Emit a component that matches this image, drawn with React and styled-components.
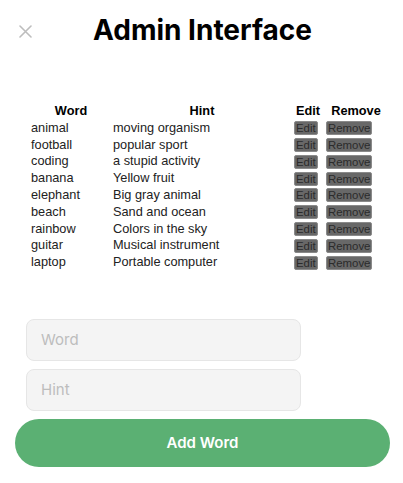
import React from "react";
import styled, { createGlobalStyle } from "styled-components";

const GlobalStyle = createGlobalStyle`
  html, body { margin: 0; padding: 0; background: #fff; }
  body { font-family: Inter, "Liberation Sans", sans-serif; }
`;

const Page = styled.div`
  width: 403px;
  height: 483px;
  box-sizing: border-box;
  display: flex;
  flex-direction: column;
  padding: 12px 13px 0 15px;
`;

const Header = styled.header`
  display: grid;
  grid-template-columns: 30px 1fr 30px;
  align-items: center;
  height: 36px;
`;

const CloseButton = styled.button`
  border: 0;
  background: none;
  padding: 0;
  width: 16px;
  height: 16px;
  margin-left: 2px;
  margin-top: 2px;
  display: flex;
  align-items: center;
  justify-content: center;
  cursor: pointer;
`;

const Title = styled.h1`
  margin: 0;
  text-align: center;
  font-family: Inter, "Liberation Sans", sans-serif;
  font-weight: 700;
  font-size: 28px;
  color: #000;
  letter-spacing: 0;
`;

const Table = styled.table`
  width: 360px;
  margin: 54px 0 0 14px;
  border-spacing: 2px;
  table-layout: fixed;
  font-family: "Liberation Sans", Arial, sans-serif;
  font-size: 12.75px;
  color: #222;
`;

const Th = styled.th`
  padding: 0;
  font-weight: 700;
  color: #000;
  text-align: center;
  line-height: 14.8px;
  white-space: nowrap;
`;

const Td = styled.td`
  padding: 0;
  text-align: left;
  line-height: 14.8px;
  white-space: nowrap;
`;

const SmallButton = styled.button`
  display: block;
  box-sizing: border-box;
  height: 14px;
  margin: 0 0 0 ${(p) => p.$offset || 0}px;
  padding: 0 1px;
  border: 1px solid #8a8a8a;
  border-radius: 2px;
  background: #686868;
  color: #2b2b2b;
  font-family: "Liberation Sans", Arial, sans-serif;
  font-size: 11.4px;
  line-height: 12px;
`;

const Form = styled.form`
  margin-top: 47px;
  display: flex;
  flex-direction: column;
  gap: 8px;
`;

const Input = styled.input`
  box-sizing: border-box;
  width: 275px;
  height: 42px;
  margin-left: 11px;
  padding: 0 14px;
  border: 1px solid #e6e6e6;
  border-radius: 8px;
  background: #f4f4f4;
  font-family: Inter, "Liberation Sans", sans-serif;
  font-size: 15px;
  color: #333;
  outline: none;
  &::placeholder { color: #bdbdbd; }
`;

const AddButton = styled.button`
  box-sizing: border-box;
  width: 375px;
  height: 48px;
  border: 0;
  border-radius: 24px;
  background: #5bb073;
  color: #fff;
  font-family: Inter, "Liberation Sans", sans-serif;
  font-weight: 600;
  font-size: 15px;
  cursor: pointer;
`;

const words = [
  ["animal", "moving organism"],
  ["football", "popular sport"],
  ["coding", "a stupid activity"],
  ["banana", "Yellow fruit"],
  ["elephant", "Big gray animal"],
  ["beach", "Sand and ocean"],
  ["rainbow", "Colors in the sky"],
  ["guitar", "Musical instrument"],
  ["laptop", "Portable computer"],
];

export default function App() {
  return (
    <Page>
      <GlobalStyle />
      <Header>
        <CloseButton aria-label="Close">
          <svg width="13" height="13" viewBox="0 0 13 13">
            <path d="M1 1 L12 12 M12 1 L1 12" stroke="#bdbdbd" strokeWidth="1.6" strokeLinecap="round" />
          </svg>
        </CloseButton>
        <Title>Admin Interface</Title>
        <span />
      </Header>
      <Table>
        <colgroup>
          <col style={{ width: 80 }} />
          <col style={{ width: 178 }} />
          <col style={{ width: 30 }} />
          <col style={{ width: 62 }} />
        </colgroup>
        <thead>
          <tr>
            <Th>Word</Th>
            <Th>Hint</Th>
            <Th>Edit</Th>
            <Th>Remove</Th>
          </tr>
        </thead>
        <tbody>
          {words.map(([w, h]) => (
            <tr key={w}>
              <Td>{w}</Td>
              <Td>{h}</Td>
              <Td><SmallButton type="button" $offset={1}>Edit</SmallButton></Td>
              <Td><SmallButton type="button" $offset={1}>Remove</SmallButton></Td>
            </tr>
          ))}
        </tbody>
      </Table>
      <Form onSubmit={(e) => e.preventDefault()}>
        <Input placeholder="Word" />
        <Input placeholder="Hint" />
        <AddButton type="submit">Add Word</AddButton>
      </Form>
    </Page>
  );
}
